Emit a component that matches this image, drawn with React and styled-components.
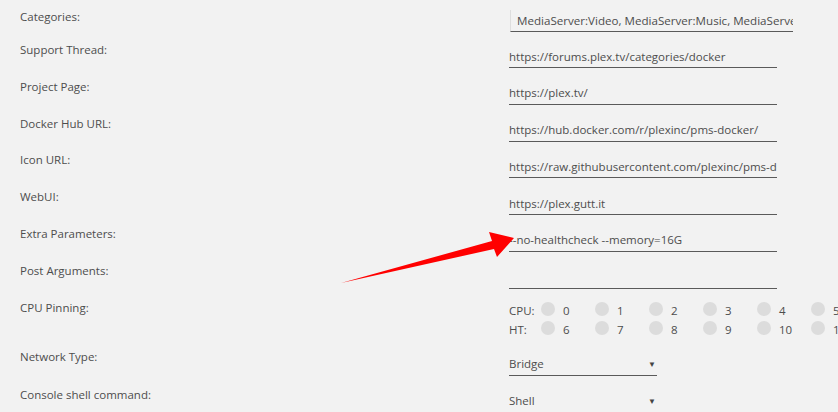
import styled, { createGlobalStyle } from "styled-components";

const GlobalStyle = createGlobalStyle`
  html, body {
    margin: 0;
    padding: 0;
    background: #f2f2f2;
  }
  body {
    font-family: "Open Sans", "Liberation Sans", sans-serif;
    font-size: 11.5px;
    color: #4d4d4d;
  }
`;

const cpus = [0, 1, 2, 3, 4, 5];
const threads = [6, 7, 8, 9, 10, 11];

function App() {
  return (
    <>
      <GlobalStyle />
      <Page>
        <Form>
          <Row $height={33} $top={7}>
            <Label>Categories:</Label>
            <Control>
              <MultiSelect>MediaServer:Video, MediaServer:Music, MediaServer:Photos</MultiSelect>
            </Control>
          </Row>
          <Row>
            <Label>Support Thread:</Label>
            <Control>
              <TextInput defaultValue="https://forums.plex.tv/categories/docker" />
            </Control>
          </Row>
          <Row>
            <Label>Project Page:</Label>
            <Control>
              <TextInput defaultValue="https://plex.tv/" />
            </Control>
          </Row>
          <Row>
            <Label>Docker Hub URL:</Label>
            <Control>
              <TextInput defaultValue="https://hub.docker.com/r/plexinc/pms-docker/" />
            </Control>
          </Row>
          <Row>
            <Label>Icon URL:</Label>
            <Control>
              <TextInput defaultValue="https://raw.githubusercontent.com/plexinc/pms-docker/master/img/plex-server.png" />
            </Control>
          </Row>
          <Row>
            <Label>WebUI:</Label>
            <Control>
              <TextInput defaultValue="https://plex.gutt.it" />
            </Control>
          </Row>
          <Row>
            <Label>Extra Parameters:</Label>
            <Control>
              <TextInput defaultValue="--no-healthcheck --memory=16G" />
            </Control>
          </Row>
          <Row>
            <Label>Post Arguments:</Label>
            <Control>
              <TextInput defaultValue="" />
            </Control>
          </Row>
          <Row $height={49}>
            <Label>CPU Pinning:</Label>
            <PinGrid>
              <PinLine>
                <PinLabel>CPU:</PinLabel>
                {cpus.map((n) => (
                  <Pin key={n}>
                    <Dot />
                    {n}
                  </Pin>
                ))}
              </PinLine>
              <PinLine>
                <PinLabel>HT:</PinLabel>
                {threads.map((n) => (
                  <Pin key={n}>
                    <Dot />
                    {n}
                  </Pin>
                ))}
              </PinLine>
            </PinGrid>
          </Row>
          <Row $height={38}>
            <Label>Network Type:</Label>
            <Control $offset={6}>
              <Select>
                Bridge
                <Caret>▼</Caret>
              </Select>
            </Control>
          </Row>
          <Row $height={38}>
            <Label>Console shell command:</Label>
            <Control $offset={5}>
              <Select>
                Shell
                <Caret>▼</Caret>
              </Select>
            </Control>
          </Row>
        </Form>

        <Pointer width="838" height="412" viewBox="0 0 838 412">
          <polygon
            points="341,283 492,241 489,232 514,238 497,257 494,249"
            fill="#ff0000"
          />
        </Pointer>
      </Page>
    </>
  );
}
export default App;

const Page = styled.div`
  position: relative;
  width: 838px;
  overflow: hidden;
`;

const Form = styled.div`
  display: flex;
  flex-direction: column;
  padding-left: 20px;
`;

const Row = styled.div`
  display: grid;
  grid-template-columns: 489px 1fr;
  height: ${(p) => p.$height || 36.8}px;
  margin-top: ${(p) => p.$top || 0}px;
`;

const Label = styled.div`
  line-height: 20px;
`;

const Control = styled.div`
  padding-top: ${(p) => (p.$offset !== undefined ? p.$offset : 5)}px;
`;

const TextInput = styled.input`
  display: block;
  box-sizing: border-box;
  width: 268px;
  height: 23px;
  padding: 0;
  margin: 0;
  border: none;
  border-bottom: 1px solid #5a5a5a;
  background: transparent;
  font: inherit;
  color: #4d4d4d;
  outline: none;
`;

const MultiSelect = styled.div`
  box-sizing: border-box;
  width: 283px;
  height: 22px;
  margin-top: -2px;
  margin-left: 1px;
  padding-left: 6px;
  line-height: 21px;
  font-size: 11.6px;
  white-space: nowrap;
  overflow: hidden;
  border-left: 1px solid #dedede;
  border-bottom: 1px solid #5a5a5a;
`;

const PinGrid = styled.div`
  display: flex;
  flex-direction: column;
  padding-top: 3px;
`;

const PinLine = styled.div`
  display: flex;
  align-items: center;
  height: 19px;
  white-space: nowrap;
`;

const PinLabel = styled.span`
  width: 32px;
  flex: none;
`;

const Pin = styled.span`
  display: flex;
  align-items: center;
  width: 54px;
  flex: none;
`;

const Dot = styled.span`
  width: 14px;
  height: 14px;
  border-radius: 50%;
  background: #dcdcdc;
  margin-right: 8px;
  margin-top: -3px;
`;

const Select = styled.div`
  box-sizing: border-box;
  display: flex;
  justify-content: space-between;
  align-items: center;
  width: 148px;
  height: 23px;
  border-bottom: 1px solid #5a5a5a;
`;

const Caret = styled.span`
  font-size: 8px;
  margin-right: 1px;
  color: #444;
`;

const Pointer = styled.svg`
  position: absolute;
  left: 0;
  top: 0;
  pointer-events: none;
`;
